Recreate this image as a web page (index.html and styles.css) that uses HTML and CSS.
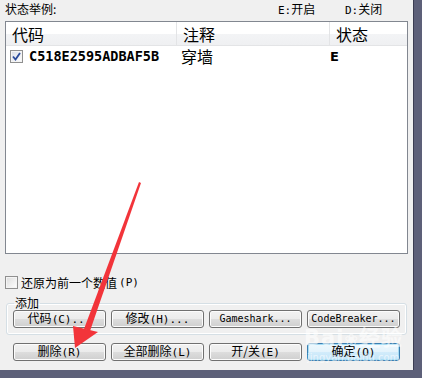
FILE: index.html
```html
<!DOCTYPE html>
<html lang="zh-CN">
<head>
<meta charset="UTF-8">
<title>金手指</title>
<link rel="stylesheet" href="styles.css">
</head>
<body>
<div class="dialog">
 <!-- 状态说明 -->
 <div class="legend-row">
 <span class="legend-title">状态举例:</span>
 <span class="legend-on"><span class="mono">E:</span>开启</span>
 <span class="legend-off"><span class="mono">D:</span>关闭</span>
 </div>

 <!-- 代码列表 -->
 <div class="list">
 <div class="list-head">
 <div class="col col-code">代码</div>
 <div class="col col-note">注释</div>
 <div class="col col-state">状态</div>
 </div>
 <div class="list-row">
 <div class="col col-code">
 <span class="check checked">
 <svg width="9" height="9" viewBox="0 0 9 9"><path d="M1 4.5 L3.5 7.5 L8 1" fill="none" stroke="#2a4a9a" stroke-width="1.8"/></svg>
 </span>
 <span class="code">C518E2595ADBAF5B</span>
 </div>
 <div class="col col-note">穿墙</div>
 <div class="col col-state"><b class="state">E</b></div>
 </div>
 </div>

 <label class="restore"><span class="check"></span>还原为前一个数值<span class="mono">(P)</span></label>

 <fieldset class="group">
 <legend>添加</legend>
 <div class="btn-row">
 <button class="btn">代码<span class="mono">(C)...</span></button>
 <button class="btn">修改<span class="mono">(H)...</span></button>
 <button class="btn mono">Gameshark...</button>
 <button class="btn mono">CodeBreaker...</button>
 </div>
 </fieldset>

 <div class="btn-row bottom-row">
 <button class="btn">删除<span class="mono">(R)</span></button>
 <button class="btn">全部删除<span class="mono">(L)</span></button>
 <button class="btn">开/关<span class="mono">(E)</span></button>
 <button class="btn btn-default">确定<span class="mono">(O)</span></button>
 </div>

 <!-- 水印 -->
 <div class="watermark">
 <span class="wm-big">Bai<span class="paw">❀</span>经验</span>
 <span class="wm-small">jingyan.baidu.com</span>
 </div>

 <!-- 红色箭头 -->
 <svg class="arrow" width="414" height="370" viewBox="0 0 414 370">
 <polygon points="139,182 141,183 90,331 84,329" fill="#f2343a"/>
 <polygon points="73,326 98,332 75,348" fill="#f2343a"/>
 </svg>
</div>
</body>
</html>
```

FILE: styles.css
```css
body {
 margin: 0;
 background-color: #5d6079;
 font-family: "Noto Sans CJK SC", "DejaVu Sans", sans-serif;
 font-size: 12px;
 color: #000;
}
.dialog {
 position: relative;
 width: 413px;
 height: 370px;
 background-color: #f0f0f0;
 border-right: 1px solid #3b3d52;
 overflow: hidden;
}
.mono {
 font-family: "DejaVu Sans Mono", "Noto Sans CJK SC", monospace;
 font-size: 11px;
}
.legend-row {
 display: flex;
 height: 20px;
 padding-top: 1px;
 line-height: 16px;
 padding-left: 5px;
}
.legend-title {
 width: 273px;
}
.legend-on {
 width: 67px;
}
.list {
 margin-left: 5px;
 width: 401px;
 height: 231px;
 border: 1px solid #828790;
 background-color: #fff;
}
.list-head {
 display: flex;
 height: 23px;
 background: linear-gradient(#ffffff, #ffffff 50%, #f3f4f6 51%, #eff0f2);
 border-bottom: 1px solid #e3e4e6;
 font-size: 16px;
 line-height: 22px;
}
.list-head .col {
 border-right: 1px solid #e3e4e6;
}
.list-head .col-state {
 border-right: none;
}
.col {
 display: flex;
 align-items: center;
 padding-left: 6px;
}
.col-code {
 width: 164px;
}
.col-note {
 width: 146px;
}
.col-state {
 flex: 1;
}
.list-row {
 display: flex;
 height: 21px;
 font-size: 16px;
 line-height: 21px;
}
.list-row .col-code {
 padding-left: 4px;
 width: 166px;
}
.list-row .col-note {
 padding-left: 5px;
 width: 147px;
}
.list-row .col-state {
 padding-left: 2px;
}
.code {
 margin-left: 6px;
 font-family: "DejaVu Sans Mono", monospace;
 font-weight: bold;
 font-size: 13.5px;
}
.state {
 font-family: "DejaVu Sans", sans-serif;
 font-size: 13px;
}
.check {
 display: inline-flex;
 align-items: center;
 justify-content: center;
 width: 11px;
 height: 11px;
 border: 1px solid #8f8f8f;
 background: linear-gradient(135deg, #dcdcdc, #ffffff);
 box-shadow: inset 0 0 0 1px #f4f4f4;
 box-sizing: content-box;
}
.check.checked {
 background: linear-gradient(135deg, #d8dce6, #ffffff);
}
.restore {
 display: flex;
 align-items: center;
 gap: 2px;
 margin-top: 21px;
 padding-left: 5px;
 height: 14px;
 font-size: 12px;
}
.restore .check {
 margin-right: 1px;
}
.group {
 margin: 8px 8px 0 6px;
 padding: 1px 6px 6px 6px;
 border: 1px solid #d5dfe5;
 border-radius: 3px;
 box-shadow: inset 0 0 0 1px #fff;
}
.group legend {
 margin-left: 1px;
 padding: 0 1px;
 line-height: 12px;
 font-size: 12px;
}
.btn-row {
 display: flex;
 gap: 5px;
}
.bottom-row {
 margin-top: 8px;
 padding-left: 13px;
}
.btn {
 width: 93px;
 height: 18px;
 padding: 0;
 border: 1px solid #707070;
 border-radius: 3px;
 background: linear-gradient(#f2f2f2, #ebebeb 50%, #dddddd 51%, #cfcfcf);
 box-shadow: inset 0 0 0 1px #fcfcfc;
 font-family: "Noto Sans CJK SC", "DejaVu Sans", sans-serif;
 font-size: 12px;
 line-height: 14px;
 color: #000;
}
.btn.mono {
 font-family: "DejaVu Sans Mono", monospace;
 font-size: 10px;
}
.btn-default {
 border-color: #3c7fb1;
 background: linear-gradient(#eef8fd, #e3f3fc 50%, #d2ecfb 51%, #c2e4f8);
 box-shadow: inset 0 0 0 1px #a6dcf4;
}
.watermark {
 position: absolute;
 left: 304px;
 top: 326px;
 display: flex;
 flex-direction: column;
 color: rgba(255, 255, 255, 0.6);
 font-family: "DejaVu Sans", sans-serif;
}
.wm-big {
 font-size: 21px;
 font-weight: bold;
 line-height: 24px;
 letter-spacing: 1px;
}
.paw {
 font-size: 16px;
}
.wm-small {
 font-size: 10px;
 line-height: 12px;
 padding-left: 3px;
}
.arrow {
 position: absolute;
 left: 0;
 top: 0;
 pointer-events: none;
}
```
